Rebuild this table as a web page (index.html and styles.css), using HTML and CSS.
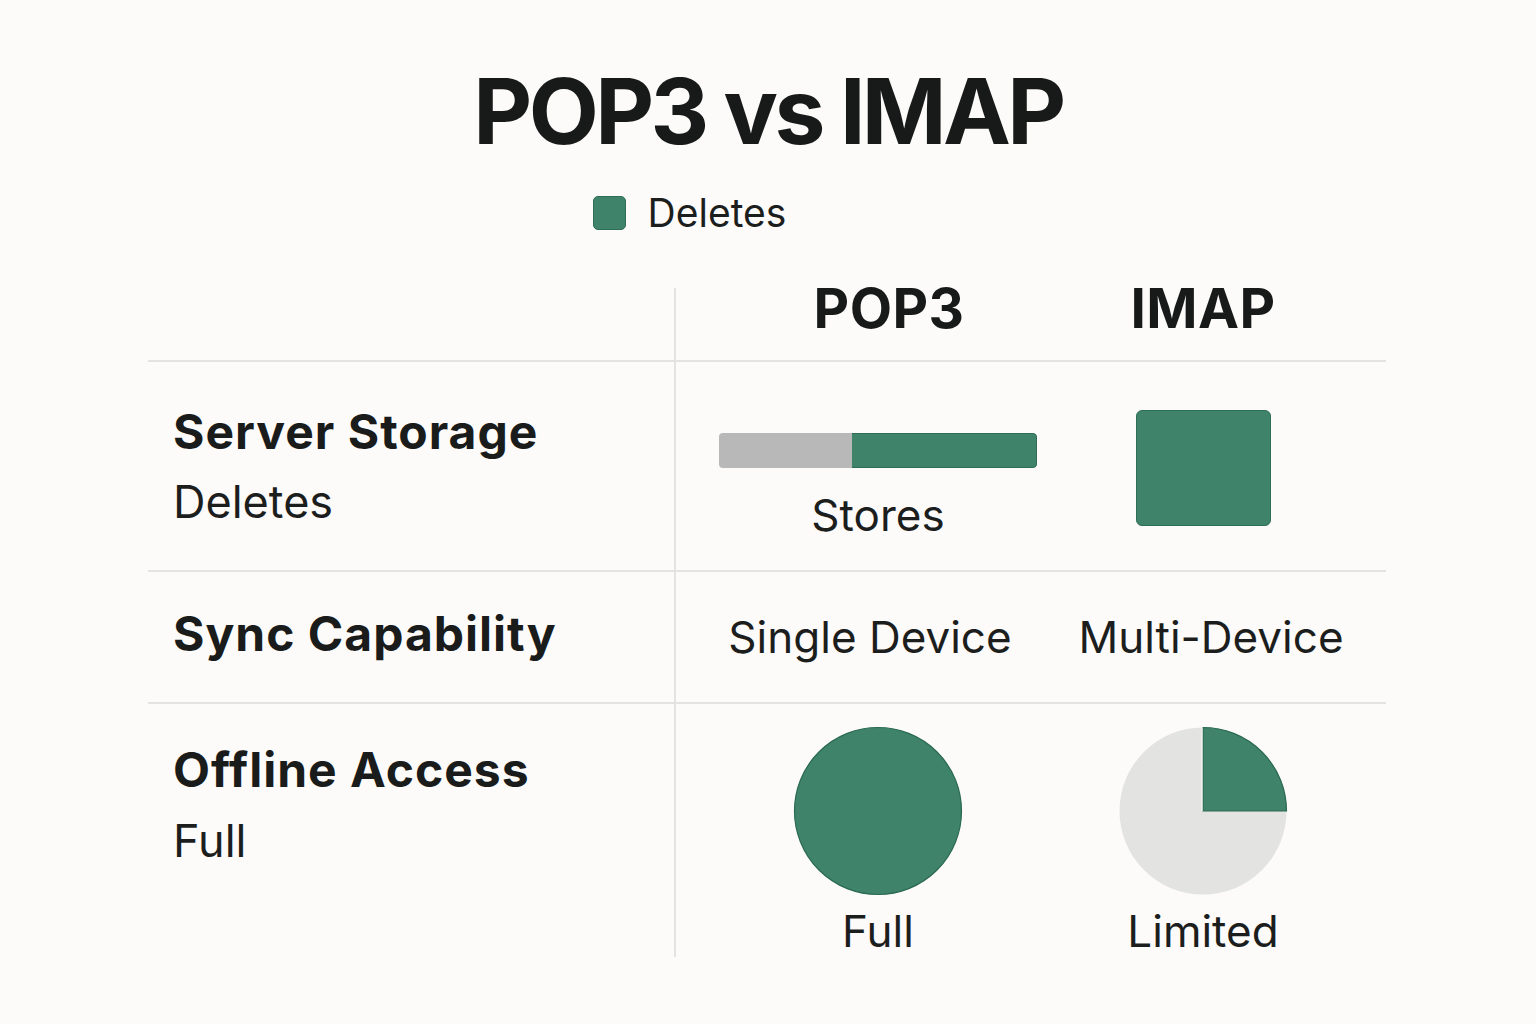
FILE: index.html
```html
<!DOCTYPE html>
<html lang="en">
<head>
<meta charset="utf-8">
<title>POP3 vs IMAP</title>
<link rel="stylesheet" href="styles.css">
</head>
<body>
<main class="page">
  <h1 class="title">POP3 vs IMAP</h1>
  <div class="legend">
    <span class="legend-swatch"></span>
    <span class="legend-label">Deletes</span>
  </div>

  <section class="table">
    <div class="row row-head">
      <div class="cell cell-label"></div>
      <div class="cell cell-pop"><span class="col-title col-title-pop">POP3</span></div>
      <div class="cell cell-imap"><span class="col-title">IMAP</span></div>
    </div>

    <div class="row row-storage">
      <div class="cell cell-label">
        <div class="label">Server Storage</div>
        <div class="sublabel">Deletes</div>
      </div>
      <div class="cell cell-pop">
        <div class="bar">
          <span class="bar-gray"></span>
          <span class="bar-green"></span>
        </div>
        <div class="value value-stores">Stores</div>
      </div>
      <div class="cell cell-imap">
        <div class="block"></div>
      </div>
    </div>

    <div class="row row-sync">
      <div class="cell cell-label">
        <div class="label">Sync Capability</div>
      </div>
      <div class="cell cell-pop">
        <div class="value value-single">Single Device</div>
      </div>
      <div class="cell cell-imap">
        <div class="value value-multi">Multi-Device</div>
      </div>
    </div>

    <div class="row row-offline">
      <div class="cell cell-label">
        <div class="label">Offline Access</div>
        <div class="sublabel sublabel-full">Full</div>
      </div>
      <div class="cell cell-pop">
        <svg class="pie" width="170" height="170" viewBox="0 0 170 170">
          <circle cx="85" cy="85" r="83.5" fill="#3f846a" stroke="#2a6a50" stroke-width="1.2"/>
        </svg>
        <div class="value value-pie">Full</div>
      </div>
      <div class="cell cell-imap">
        <svg class="pie" width="170" height="170" viewBox="0 0 170 170">
          <circle cx="85" cy="85" r="83.5" fill="#e3e3e1"/>
          <path d="M85 1.5 A83.5 83.5 0 0 1 168.5 85 L85 85 Z" fill="#3f846a" stroke="#2a6a50" stroke-width="1.2" stroke-linejoin="miter"/>
          <line x1="84" y1="1.5" x2="84" y2="85" stroke="#f4f6f2" stroke-width="1.2"/>
        </svg>
        <div class="value value-pie">Limited</div>
      </div>
    </div>
  </section>
</main>
</body>
</html>
```

FILE: styles.css
```css
* {
  box-sizing: border-box;
}

html,
body {
  margin: 0;
  padding: 0;
  background: #fcfbf9;
}

body {
  font-family: "Inter", "Liberation Sans", "DejaVu Sans", sans-serif;
  color: #1a1c1c;
  width: 1536px;
  height: 1024px;
  overflow: hidden;
}

.page {
  display: flex;
  flex-direction: column;
  align-items: center;
  padding-top: 61px;
}

.title {
  margin: 0;
  font-size: 91px;
  line-height: 100px;
  font-weight: 700;
  letter-spacing: -3.6px;
  color: #181a1a;
}

.legend {
  display: flex;
  align-items: center;
  gap: 22px;
  margin-top: 29px;
  margin-left: -157px;
}

.legend-swatch {
  width: 33px;
  height: 34px;
  border-radius: 5px;
  background: #3f846a;
  border: 1px solid #2f6e54;
}

.legend-label {
  font-size: 39px;
  line-height: 46px;
  font-weight: 400;
  color: #1c1e1e;
}

.table {
  align-self: flex-start;
  margin-left: 148px;
  margin-top: 52px;
  width: 1238px;
}

.row {
  display: grid;
  grid-template-columns: 526px 406px 306px;
  border-bottom: 2px solid #e3e3e1;
}

.row-offline {
  border-bottom: none;
}

.row-head {
  height: 74px;
}

.row-storage {
  height: 210px;
}

.row-sync {
  height: 132px;
}

.row-offline {
  height: 253px;
}

.cell-pop {
  border-left: 2px solid #e3e3e1;
  display: flex;
  flex-direction: column;
  align-items: center;
}

.cell-imap {
  display: flex;
  flex-direction: column;
  align-items: center;
  padding-right: 60px;
}

.cell-label {
  padding-left: 25px;
}

.col-title {
  font-size: 55px;
  line-height: 60px;
  font-weight: 700;
  letter-spacing: 0.4px;
  color: #181a1a;
  margin-top: -10px;
}

.col-title-pop {
  margin-left: 22px;
}

.label {
  font-size: 48px;
  line-height: 54px;
  font-weight: 700;
  letter-spacing: 1px;
  color: #1a1c1c;
}

.sublabel {
  font-size: 45px;
  line-height: 52px;
  font-weight: 400;
  color: #1c1e1e;
}

.value {
  font-size: 44px;
  line-height: 52px;
  font-weight: 400;
  color: #1c1e1e;
  white-space: nowrap;
}

/* row 1 */
.row-storage .cell-label {
  padding-top: 43px;
}

.row-storage .sublabel {
  margin-top: 17px;
}

.row-storage .cell-pop {
  padding-top: 71px;
}

.bar {
  display: flex;
  width: 318px;
  height: 35px;
  border-radius: 4px;
  overflow: hidden;
}

.bar-gray {
  width: 133px;
  background: #b8b8b8;
}

.bar-green {
  flex: 1;
  background: #3f846a;
  border: 1px solid #2f6e54;
  border-left: none;
  border-radius: 0 4px 4px 0;
}

.value-stores {
  margin-top: 21px;
}

.row-storage .cell-imap {
  padding-top: 48px;
}

.block {
  width: 135px;
  height: 116px;
  border-radius: 6px;
  background: #3f846a;
  border: 1px solid #2f6e54;
}

/* row 2 */
.row-sync .cell-label {
  padding-top: 35px;
}

.row-sync .cell-pop,
.row-sync .cell-imap {
  padding-top: 39px;
}

.value-single {
  margin-right: 16px;
}

.value-multi {
  margin-left: 16px;
}

/* row 3 */
.row-offline .cell-label {
  padding-top: 39px;
}

.sublabel-full {
  margin-top: 18px;
}

.row-offline .cell-pop,
.row-offline .cell-imap {
  padding-top: 22px;
}

.pie {
  display: block;
}

.value-pie {
  margin-top: 9px;
}
```
